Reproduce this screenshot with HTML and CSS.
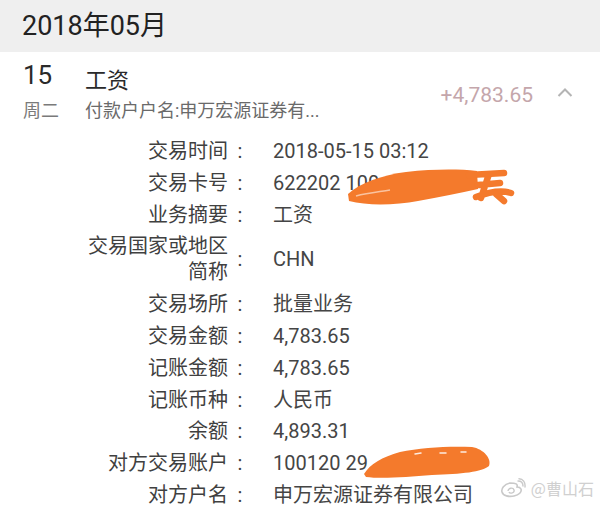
FILE: index.html
```html
<!DOCTYPE html>
<html lang="zh-CN">
  <head>
    <meta charset="UTF-8" />
    <meta name="viewport" content="width=device-width, initial-scale=1.0" />
    <title>交易明细</title>
    <link rel="stylesheet" href="styles.css">
  </head>
  <body>
    <div class="month-bar">2018年05月</div>

    <div class="summary">
      <div class="date-col">
        <div class="day">15</div>
        <div class="weekday">周二</div>
      </div>
      <div class="main-col">
        <div class="title">工资</div>
        <div class="payer">付款户户名:申万宏源证券有...</div>
      </div>
      <div class="amount-col">
        <span class="amount">+4,783.65</span>
        <svg class="chevron" width="16" height="9" viewBox="0 0 16 9">
          <polyline points="1.5,8 8,1.5 14.5,8" fill="none" stroke="#b4b4b4" stroke-width="2" />
        </svg>
      </div>
    </div>

    <div class="details">
      <div class="label">交易时间</div><div class="colon">:</div>
      <div class="value">2018-05-15 03:12</div>

      <div class="label">交易卡号</div><div class="colon">:</div>
      <div class="value masked">622202 100
        <svg class="scribble scribble-card" width="170" height="40" viewBox="0 0 170 40">
          <path d="M2 27 C14 16 36 8 60 5 C88 2 112 2 131 4 L132 22 C114 26 94 30 72 34 C50 38 22 39 3 34 Z" fill="#f47a2c" />
          <path d="M10 29 C22 26 32 25 44 23" stroke="#fff" stroke-width="1.5" fill="none" opacity="0.55" />
          <path d="M123 8 L158 6 M132 18 L154 16 M130 30 C143 25 155 23 165 26 M143 7 L135 31 M150 27 L158 34" stroke="#f47a2c" stroke-width="6.5" stroke-linecap="round" fill="none" />
        </svg>
      </div>

      <div class="label">业务摘要</div><div class="colon">:</div>
      <div class="value">工资</div>

      <div class="label">交易国家或地区<br />简称</div><div class="colon">:</div>
      <div class="value">CHN</div>

      <div class="label">交易场所</div><div class="colon">:</div>
      <div class="value">批量业务</div>

      <div class="label">交易金额</div><div class="colon">:</div>
      <div class="value">4,783.65</div>

      <div class="label">记账金额</div><div class="colon">:</div>
      <div class="value">4,783.65</div>

      <div class="label">记账币种</div><div class="colon">:</div>
      <div class="value">人民币</div>

      <div class="label">余额</div><div class="colon">:</div>
      <div class="value">4,893.31</div>

      <div class="label">对方交易账户</div><div class="colon">:</div>
      <div class="value masked">100120 29
        <svg class="scribble scribble-account" width="130" height="36" viewBox="0 0 130 36">
          <path d="M2 30 C8 20 20 13 38 8 C60 3 90 2 110 3 C122 5 130 15 127 22 C120 28 100 30 70 31 C45 33 20 35 4 33 Z" fill="#f47a2c" />
          <path d="M53 10 L59 9 M78 9 L84 9 M99 8 L104 8" stroke="#fff" stroke-width="1.5" stroke-linecap="round" opacity="0.85" />
        </svg>
      </div>

      <div class="label">对方户名</div><div class="colon">:</div>
      <div class="value">申万宏源证券有限公司</div>
    </div>

    <div class="watermark">
      <svg width="26" height="20" viewBox="0 0 26 20">
        <path d="M10 5 C4 6 1 11 2 14 C3 18 9 19 14 18 C19 17 22 14 21 11 C20 9 18 9 17 9 C18 6 16 5 10 5 Z" fill="none" stroke="#c9c9c9" stroke-width="1.6" />
        <path d="M8 13 C8 10 13 9 14 12 C15 15 10 16 9 14" fill="none" stroke="#c9c9c9" stroke-width="1.4" />
        <path d="M18 3 C21 3 23 5 23 8 M19 0.8 C23 1 25.5 4 25 9" fill="none" stroke="#c9c9c9" stroke-width="1.4" stroke-linecap="round" />
      </svg>
      <span>@曹山石</span>
    </div>
  </body>
</html>
```

FILE: styles.css
```css
* {
  box-sizing: border-box;
  margin: 0;
  padding: 0;
}

body {
  position: relative;
  width: 600px;
  height: 509px;
  overflow: hidden;
  background: #fff;
  font-family: Roboto, "Noto Sans CJK SC", sans-serif;
  color: #3e3e3e;
}

.month-bar {
  height: 52px;
  line-height: 52px;
  padding-left: 22px;
  background: #efefef;
  font-size: 27px;
  color: #222;
}

.summary {
  display: flex;
  padding: 8px 27px 0 23px;
}

.date-col {
  width: 62px;
}

.day {
  font-size: 26px;
  line-height: 30px;
  color: #2a2a2a;
}

.weekday {
  margin-top: 9px;
  font-size: 18px;
  line-height: 24px;
  color: #7a7a7a;
}

.main-col {
  flex: 1;
}

.title {
  padding-top: 6px;
  font-size: 22px;
  line-height: 30px;
  color: #2a2a2a;
}

.payer {
  margin-top: 3px;
  font-size: 18px;
  line-height: 24px;
  color: #6a6a6a;
}

.amount-col {
  display: flex;
  align-items: center;
  gap: 24px;
  height: 30px;
  margin-top: 20px;
}

.amount {
  font-size: 21px;
  color: #c4a6ab;
}

.chevron {
  margin-top: -6px;
}

.details {
  display: grid;
  grid-template-columns: 228px 24px 1fr;
  row-gap: 5.8px;
  margin-top: 15px;
  font-size: 20px;
  line-height: 26px;
}

.label {
  text-align: right;
  color: #404040;
}

.colon {
  align-self: center;
  text-align: center;
  color: #404040;
}

.value {
  align-self: center;
  padding-left: 21px;
  color: #454545;
}

.masked {
  position: relative;
}

.scribble {
  position: absolute;
}

.scribble-card {
  left: 94px;
  top: -3px;
}

.scribble-account {
  left: 110px;
  top: -6px;
}

.watermark {
  position: absolute;
  right: 6px;
  bottom: 9px;
  display: flex;
  align-items: center;
  gap: 5px;
  font-family: "Noto Sans CJK SC", sans-serif;
  font-size: 16px;
  color: #d0d0d0;
  text-shadow: 0 0 2px #fff;
}
```
